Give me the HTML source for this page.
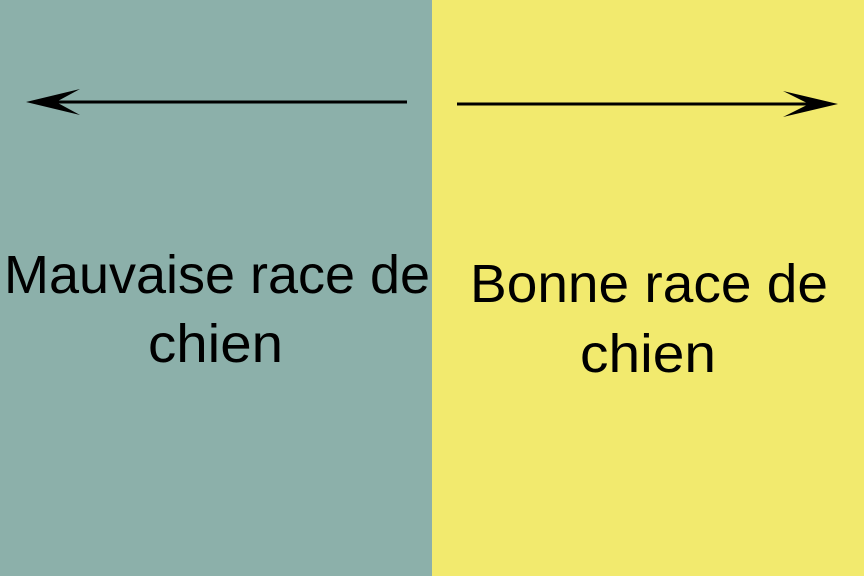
<!DOCTYPE html>
<html><head><meta charset="utf-8"><style>
html,body{margin:0;padding:0;width:864px;height:576px;overflow:hidden}
</style></head><body>
<svg width="864" height="576" viewBox="0 0 864 576" xmlns="http://www.w3.org/2000/svg" style="display:block">
<rect x="0" y="0" width="432" height="576" fill="#8cb0aa"/>
<rect x="432" y="0" width="432" height="576" fill="#f2ea6e"/>
<line x1="55" y1="102" x2="407" y2="102" stroke="#000" stroke-width="3"/>
<path d="M26 102 L80 89 L56 102 L80 115 Z" fill="#000"/>
<line x1="457" y1="104" x2="811" y2="104" stroke="#000" stroke-width="3"/>
<path d="M838 104 L783 91 L809 104 L783 117 Z" fill="#000"/>
<g font-family="Liberation Sans, sans-serif" font-size="54" fill="#000">
<text x="4" y="293" textLength="426" lengthAdjust="spacingAndGlyphs">Mauvaise race de</text>
<text x="148" y="362" textLength="135" lengthAdjust="spacingAndGlyphs">chien</text>
<text x="470" y="302" textLength="358" lengthAdjust="spacingAndGlyphs">Bonne race de</text>
<text x="580" y="372" textLength="136" lengthAdjust="spacingAndGlyphs">chien</text>
</g>
</svg>
</body></html>
